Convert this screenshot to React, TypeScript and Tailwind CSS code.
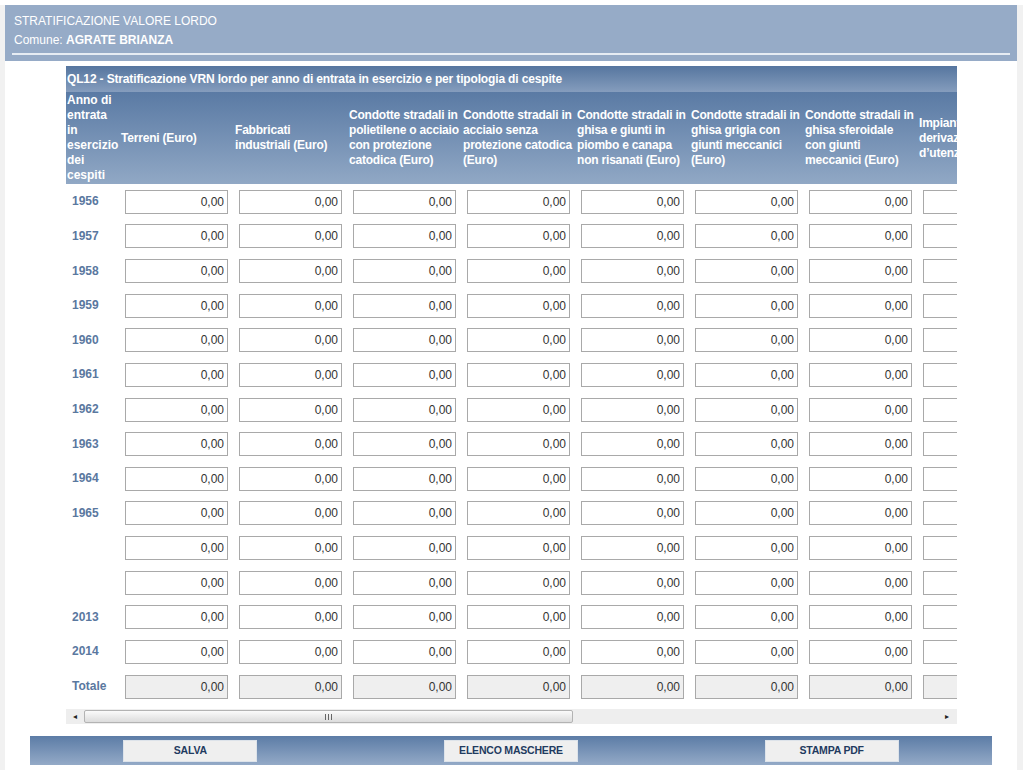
import React from 'react'

const COLUMNS = [
  'Terreni (Euro)',
  'Fabbricati industriali (Euro)',
  'Condotte stradali in polietilene o acciaio con protezione catodica (Euro)',
  'Condotte stradali in acciaio senza protezione catodica (Euro)',
  'Condotte stradali in ghisa e giunti in piombo e canapa non risanati (Euro)',
  'Condotte stradali in ghisa grigia con giunti meccanici (Euro)',
  'Condotte stradali in ghisa sferoidale con giunti meccanici (Euro)',
  'Impianti di derivazione d\u2019utenza (Euro)',
]

const ROWS = ['1956', '1957', '1958', '1959', '1960', '1961', '1962', '1963', '1964', '1965', '', '', '2013', '2014']

function Cell({ total }: { total?: boolean }) {
  return (
    <div className="w-[114px] shrink-0 pl-[5px]">
      <input
        readOnly
        defaultValue="0,00"
        className={
          'w-[103px] h-[24px] border border-[#a9a9a9] pr-[3px] text-right text-[12px] text-[#333] outline-none ' +
          (total ? 'bg-[#efefef]' : 'bg-white')
        }
      />
    </div>
  )
}

function Row({ label, total }: { label: string; total?: boolean }) {
  return (
    <div className="flex items-center h-[34.64px]">
      <div className="w-[54px] shrink-0 pl-[6px] text-[12px] font-bold text-[#5a789f]">{label}</div>
      {COLUMNS.map((c) => (
        <Cell key={c} total={total} />
      ))}
    </div>
  )
}

export default function App() {
  return (
    <div className="w-[1023px] h-[770px] overflow-hidden bg-white pt-[5px] font-['Liberation_Sans',Arial,sans-serif]">
      <div className="h-[765px] border-l-[5px] border-r-[6px] border-[#f1f1f1] bg-white">
        {/* intestazione */}
        <div className="h-[56px] bg-[#96abc7] px-[9px] pt-[7px] text-[12px] leading-[19px] text-white">
          <div>STRATIFICAZIONE VALORE LORDO</div>
          <div>
            Comune: <span className="font-bold">AGRATE BRIANZA</span>
          </div>
          <div className="mt-[3px] mx-[-2px] h-[2px] bg-[#e6ecf3]"></div>
        </div>

        {/* tabella */}
        <div className="ml-[61px] mt-[5px] w-[891px] overflow-hidden">
          <div className="w-[966px]">
            <div className="h-[26px] bg-gradient-to-b from-[#56769f] to-[#859dbd] pl-[1px] text-[12px] leading-[26px] font-bold tracking-[-0.15px] text-white">
              QL12 - Stratificazione VRN lordo per anno di entrata in esercizio e per tipologia di cespite
            </div>
            <div className="flex h-[92px] bg-gradient-to-b from-[#5a7aa4] to-[#91a8c5] text-[12px] leading-[15px] font-bold text-white">
              <div className="w-[54px] shrink-0 pl-[1px] pt-[1px]">
                Anno di entrata in esercizio dei cespiti
              </div>
              {COLUMNS.map((c) => (
                <div key={c} className="w-[114px] shrink-0 pl-[1px] pr-[2px] flex items-center tracking-[-0.2px]">
                  {c}
                </div>
              ))}
            </div>
            {ROWS.map((r, i) => (
              <Row key={i} label={r} />
            ))}
            <Row label="Totale" total />
          </div>

          {/* barra di scorrimento */}
          <div className="mt-[6px] h-[15px] bg-[#eeeeee] flex items-center">
            <div className="w-[18px] text-[8px] text-[#222] text-center">◂</div>
            <div className="w-[489px] h-[13px] rounded-[2px] border border-[#b3b3b3] bg-gradient-to-b from-[#fbfbfb] to-[#dcdcdc] flex items-center justify-center gap-[2px]">
              <div className="w-[1px] h-[6px] bg-[#666]"></div>
              <div className="w-[1px] h-[6px] bg-[#666]"></div>
              <div className="w-[1px] h-[6px] bg-[#666]"></div>
            </div>
            <div className="flex-1"></div>
            <div className="w-[20px] text-[8px] text-[#222] text-center">▸</div>
          </div>
        </div>

        {/* pulsanti */}
        <div className="mt-[12px] ml-[25px] w-[962px] h-[29px] bg-gradient-to-b from-[#5c7ca6] to-[#94aac7] grid grid-cols-3 items-center">
          {['SALVA', 'ELENCO MASCHERE', 'STAMPA PDF'].map((b) => (
            <div key={b} className="flex justify-center">
              <button className="w-[134px] h-[22px] bg-[#efefef] border border-[#dde3ea] text-[10.5px] tracking-[-0.2px] font-bold text-[#1f3b60]">
                {b}
              </button>
            </div>
          ))}
        </div>
      </div>
    </div>
  )
}
